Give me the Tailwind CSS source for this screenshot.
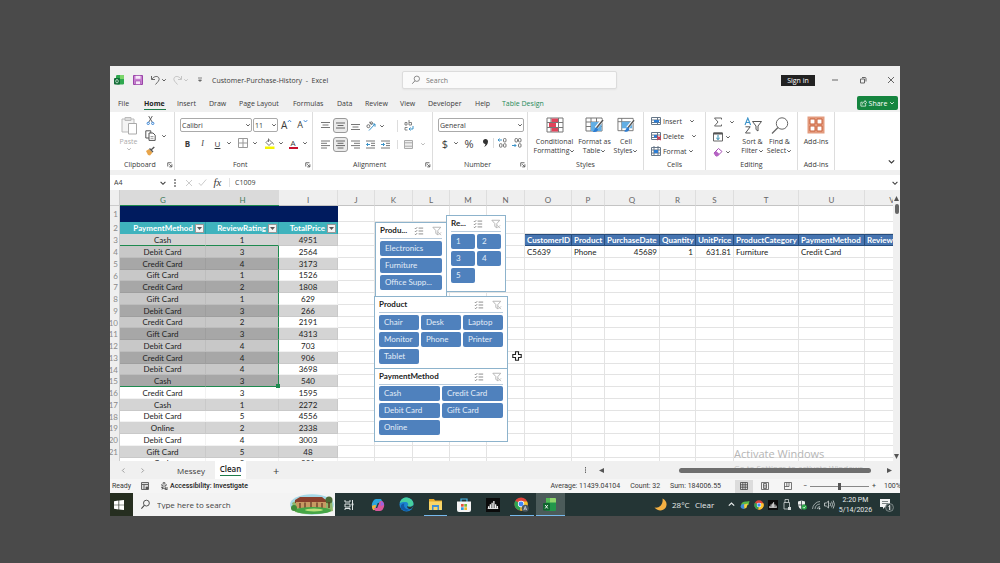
<!DOCTYPE html>
<html lang="en">

<head>
    <meta charset="UTF-8">
    <meta name="viewport" content="width=device-width, initial-scale=1.0">
    <script src="https://cdn.jsdelivr.net/npm/@tailwindcss/browser@4"></script>
    <title>Customer-Purchase-History - Excel</title>
</head>

<body class="flex min-h-screen flex-col bg-[#4a4a4a] pt-[66px] pr-[100px] pb-[47px] pl-[110px] font-['Open_Sans','Noto_Sans',sans-serif] text-[7px] leading-[9px] text-[#3a3a3a]">

    <!-- Shared icons -->
    <svg class="hidden">
        <symbol id="chev" viewBox="0 0 6 6"><path d="M1.2 2.2 3 4l1.800-1.800" fill="none" stroke="currentColor" stroke-width=".8"/></symbol>
        <symbol id="launch" viewBox="0 0 8 8"><path d="M1 6V1h5M3 3l3 3M6.500 3v3.500H3" fill="none" stroke="currentColor" stroke-width="1"/></symbol>
        <symbol id="search" viewBox="0 0 12 12"><circle cx="7" cy="4.500" r="3.200" fill="none" stroke="currentColor"/><path d="M4.700 7 1.500 10.500" stroke="currentColor" stroke-width="1.100"/></symbol>
        <symbol id="multi" viewBox="0 0 12 12"><path d="M1 2.500l1 1 1.800-2M1 6l1 1 1.800-2M1 9.500l1 1 1.800-2M5.500 2.500H11M5.500 6H11M5.500 9.500H11" fill="none" stroke="currentColor"/></symbol>
        <symbol id="nofilter" viewBox="0 0 12 12"><path d="M1 1.500h9.500L7 5.500v5L4.600 9V5.500z" fill="none" stroke="currentColor"/><path d="M7.500 7.500l3.500 3.500M11 7.500 7.500 11" stroke="currentColor" stroke-width=".8"/></symbol>
        <symbol id="chrome" viewBox="0 0 16 16"><circle cx="8" cy="8" r="7.500" fill="#e0443a"/><path d="M8 8 1.500 4.200A7.500 7.500 0 0 0 7 15.400z" fill="#2fa350"/><path d="M8 8l-1 7.400A7.500 7.500 0 0 0 15 5H8z" fill="#f9c72d"/><circle cx="8" cy="8" r="3.600" fill="#fff"/><circle cx="8" cy="8" r="2.800" fill="#4285f4"/></symbol>
        <symbol id="bars" viewBox="0 0 16 16"><path fill="#0b0b0b" d="M0 0h16v16H0z"/><path d="M3 12V9.500M5 12V7M7 12V5.500M9 12V3.500M11 12V7M13 12V9" stroke="#eee" stroke-width="1.500"/><path d="M2 12h12" stroke="#eee"/></symbol>
    </svg>

    <div class="flex flex-1 flex-col overflow-hidden bg-[#f0f0f0]">

        <!-- Title bar -->
        <header class="flex h-7 items-center pl-1">
            <svg class="size-[10px]" viewBox="0 0 10 10"><rect x="2" y="0" width="8" height="9.500" rx="1.200" fill="#2fa84f"/><path d="M6 0h3q1 0 1 1v3H6z" fill="#7bd66a"/><rect x="0" y="3" width="6" height="6.500" rx="1" fill="#126b37"/><ellipse cx="3" cy="6.200" rx="1.300" ry="1.700" fill="none" stroke="#cfe8d6" stroke-width=".8"/></svg>
            <button class="ml-[9px]" aria-label="Save"><svg class="size-[10px]" viewBox="0 0 10 10"><path d="M.5.5h9v9h-9z" fill="#c77fd0" stroke="#9a45a8"/><path d="M2.500.8h5v3h-5z" fill="#f6e8f8"/><path d="M2.500 6h5v3.500h-5z" fill="#f6e8f8" stroke="#9a45a8" stroke-width=".6"/></svg></button>
            <button class="ml-[7px]" aria-label="Undo"><svg class="h-[10px] w-[11px]" viewBox="0 0 11 10"><path d="M1.500 1v3.500H5M1.800 4.200C4 1 8 .5 9 3.200 9.800 5.500 7.500 7 5.500 9.500" fill="none" stroke="#666" stroke-width="1"/></svg></button>
            <svg class="size-[6px]"><use href="#chev"/></svg>
            <button class="ml-[5px]" aria-label="Redo"><svg class="h-[10px] w-[11px]" viewBox="0 0 11 10"><path d="M9.500 1v3.500H6M9.200 4.200C7 1 3 .5 2 3.200 1.200 5.500 3.500 7 5.500 9.500" fill="none" stroke="#c4c4c4" stroke-width="1"/></svg></button>
            <svg class="size-[6px] text-[#bbb]"><use href="#chev"/></svg>
            <svg class="ml-[8px] size-[6px]" viewBox="0 0 6 6"><path d="M1 1h4M1.500 3 3 4.500 4.500 3z" fill="#666" stroke="#666" stroke-width=".8"/></svg>
            <h1 class="ml-[9px] w-[190px] whitespace-nowrap">Customer-Purchase-History &nbsp;- &nbsp;Excel</h1>
            <label class="flex h-[18px] w-[215px] items-center rounded-[2px] border border-[#dcdcdc] bg-[#fafafa] pl-2 text-[#777] shadow-xs">
                <svg class="size-[10px]"><use href="#search"/></svg>
                <input class="ml-[5px] w-[150px] outline-none placeholder:text-[#777]" type="search" placeholder="Search" aria-label="Search">
            </label>
            <button class="ml-auto h-[11px] w-[34px] bg-[#222] leading-[11px] text-white">Sign in</button>
            <button class="ml-[16px]" aria-label="Minimize"><svg class="size-[8px]" viewBox="0 0 8 8"><path d="M1 4h6" stroke="#666"/></svg></button>
            <button class="ml-[20px]" aria-label="Restore"><svg class="size-[8px]" viewBox="0 0 8 8"><path d="M3 1.500h3q1 0 1 1v3M1.500 3h4v4h-4z" fill="none" stroke="#666"/></svg></button>
            <button class="mr-[5px] ml-[20px]" aria-label="Close"><svg class="size-[8px]" viewBox="0 0 8 8"><path d="M1 1l6 6M7 1 1 7" stroke="#666"/></svg></button>
        </header>

        <!-- Ribbon tabs -->
        <nav class="flex h-[18px] items-center pl-2 whitespace-nowrap">
            <a href="#" class="w-[26px]">File</a>
            <a href="#" class="mt-[2px] w-[22px] border-b border-[#1e7b4a] pb-px font-bold text-[#222]">Home</a>
            <a href="#" class="ml-[11px] w-[32px]">Insert</a>
            <a href="#" class="w-[30px]">Draw</a>
            <a href="#" class="w-[54px]">Page Layout</a>
            <a href="#" class="w-[44px]">Formulas</a>
            <a href="#" class="w-[28px]">Data</a>
            <a href="#" class="w-[35px]">Review</a>
            <a href="#" class="w-[28px]">View</a>
            <a href="#" class="w-[47px]">Developer</a>
            <a href="#" class="w-[27px]">Help</a>
            <a href="#" class="text-[#1e8a5a]">Table Design</a>
            <button class="mr-[2px] ml-auto flex h-[14px] w-[41px] items-center justify-center gap-[2px] rounded-[2px] bg-[#15853f] text-white">
                <svg class="size-[7px]" viewBox="0 0 8 8"><path d="M3 2.500H1V7h5.500V5M2.800 5c0-2 1.200-3 3-3V.6L7.600 3 5.800 4.800V3.500" fill="none" stroke="#fff" stroke-width=".8"/></svg>
                Share
                <svg class="size-[6px]"><use href="#chev"/></svg>
            </button>
        </nav>

        <!-- Ribbon -->
        <section class="flex h-[58px] bg-white whitespace-nowrap">
            <div class="flex w-[65px] flex-col border-r border-[#ddd]">
                <div class="flex h-12 pt-1">
                    <button class="ml-[2px] flex w-[33px] flex-col items-center text-[#aaa]">
                        <svg class="h-[19px] w-[18px]" viewBox="0 0 18 19"><path d="M2 3h12v13H2z" fill="#f4f4f4" stroke="#bbb"/><path d="M5 1.500h6v3H5z" fill="#ddd" stroke="#bbb"/><path d="M8.500 7.500h8v10.500h-8z" fill="#fff" stroke="#aaa"/></svg>
                        <span class="mt-[2px]">Paste</span>
                        <svg class="size-[6px]"><use href="#chev"/></svg>
                    </button>
                    <div class="flex flex-col gap-[5px]">
                        <button class="pl-[1px]" aria-label="Cut"><svg class="size-[9px]" viewBox="0 0 10 10"><path d="M3 0l4 7M7 0 3 7" stroke="#555"/><circle cx="2.500" cy="8.200" r="1.300" fill="none" stroke="#2b7cd3"/><circle cx="7.500" cy="8.200" r="1.300" fill="none" stroke="#2b7cd3"/></svg></button>
                        <button class="flex items-center gap-[5px]" aria-label="Copy"><svg class="size-[11px]" viewBox="0 0 11 11"><path d="M.8.800h5V8h-5z" fill="#fff" stroke="#555"/><path d="M4 3h4l2.200 2.200v5.200H4z" fill="#fff" stroke="#555"/><path d="M5.500 6.500h3M5.500 8.300h3" stroke="#777" stroke-width=".7"/></svg><svg class="size-[6px]"><use href="#chev"/></svg></button>
                        <button aria-label="Format Painter"><svg class="size-[10px]" viewBox="0 0 10 10"><path d="M1 5l3-2 3.500 3.500L5 9.500 3 9z" fill="#e8a54b"/><path d="M4.500 2.500 8 6M6 4l3.300-3" stroke="#555" stroke-width="1.400"/></svg></button>
                    </div>
                </div>
                <div class="flex items-center justify-between pr-px pl-[14px]">Clipboard <svg class="size-[6px]"><use href="#launch"/></svg></div>
            </div>

            <div class="flex w-[138px] flex-col border-r border-[#ddd]">
                <div class="flex h-12 flex-col gap-[2px] pt-[6px] pl-[5px]">
                    <div class="flex items-center">
                        <select class="h-[14px] w-[72px] appearance-none rounded-[2px] border border-[#aaa] pl-px leading-[11px]" aria-label="Font"><option>Calibri</option></select>
                        <svg class="-ml-[7px] size-[6px]"><use href="#chev"/></svg>
                        <select class="ml-[2px] h-[14px] w-[25px] appearance-none rounded-[2px] border border-[#aaa] pl-px leading-[11px]" aria-label="Font size"><option>11</option></select>
                        <svg class="-ml-[7px] size-[6px]"><use href="#chev"/></svg>
                        <button class="ml-[4px] flex" aria-label="Increase font size"><span class="text-[10px] leading-[12px]">A</span><svg class="h-[4px] w-[5px]" viewBox="0 0 5 4"><path d="M.8 3 2.500 1.200 4.200 3" fill="none" stroke="#2b7cd3" stroke-width=".9"/></svg></button>
                        <button class="ml-[5px] flex" aria-label="Decrease font size"><span class="text-[9px] leading-[12px]">A</span><svg class="h-[4px] w-[5px]" viewBox="0 0 5 4"><path d="M.8 1.200 2.500 3 4.200 1.200" fill="none" stroke="#2b7cd3" stroke-width=".9"/></svg></button>
                    </div>
                    <div class="flex h-[18px] items-center text-[8px]">
                        <button class="w-[15px] font-bold">B</button>
                        <button class="w-[15px] font-['Liberation_Serif'] italic">I</button>
                        <button class="w-[15px] underline">U</button>
                        <svg class="h-[6px] w-2"><use href="#chev"/></svg>
                        <button class="w-[18px] pl-[5px]" aria-label="Borders"><svg class="size-[10px]" viewBox="0 0 10 10"><path d="M.5.500h9v9h-9zM5 .5v9M.5 5h9" fill="none" stroke="#999"/></svg></button>
                        <svg class="h-[6px] w-2"><use href="#chev"/></svg>
                        <button class="w-[18px] pl-[5px]" aria-label="Fill color"><svg class="size-[11px]" viewBox="0 0 11 11"><path d="M2 4.500 5 1.500l3 3-3 3zM4.500.5V4M8.500 4.500l1 2" fill="none" stroke="#666" stroke-width=".9"/><path d="M1 8.500h9.500V11H1z" fill="#f4f400"/></svg></button>
                        <svg class="h-[6px] w-2"><use href="#chev"/></svg>
                        <button class="flex w-[16px] justify-center"><span class="w-[9px] border-b-2 border-[#c8102e] leading-[9px]">A</span></button>
                        <svg class="h-[6px] w-2"><use href="#chev"/></svg>
                    </div>
                </div>
                <div class="flex items-center justify-between pr-px pl-[58px]">Font <svg class="size-[6px]"><use href="#launch"/></svg></div>
            </div>

            <div class="flex w-[120px] flex-col border-r border-[#ddd]">
                <div class="flex h-12 flex-col gap-[2px] pt-[6px] pl-[5px]">
                    <div class="flex h-[15px] items-center">
                        <button class="flex w-[15px] justify-center" aria-label="Top align"><svg class="size-[9px]" viewBox="0 0 9 9"><path d="M0 1.500h9M1.500 4h6M0 6.500h9" stroke="#777"/></svg></button>
                        <button class="flex size-[15px] items-center justify-center rounded-[3px] border border-[#999] bg-[#ebebeb]" aria-label="Middle align"><svg class="size-[9px]" viewBox="0 0 9 9"><path d="M0 2h9M1.500 4.500h6M0 7h9" stroke="#666"/></svg></button>
                        <button class="flex w-[15px] justify-center" aria-label="Bottom align"><svg class="size-[9px]" viewBox="0 0 9 9"><path d="M0 3.500h9M1.500 6h6M0 8.500h9" stroke="#777"/></svg></button>
                        <button class="flex w-[15px] justify-center" aria-label="Orientation"><svg class="size-[10px]" viewBox="0 0 10 10"><path d="M3 9.500 9 3M6.300 3H9v2.700" fill="none" stroke="#3b93c9"/><circle cx="2.400" cy="5.200" r="1.500" fill="none" stroke="#666" stroke-width=".9"/><path d="M3.200 1 6 3.500" stroke="#666" stroke-width=".9"/><circle cx="5.300" cy="2" r="1.200" fill="none" stroke="#666" stroke-width=".9"/></svg></button>
                        <svg class="h-[6px] w-2"><use href="#chev"/></svg>
                        <button class="ml-[11px] flex w-[22px] justify-center border-l border-[#ddd]" aria-label="Wrap text"><svg class="h-[12px] w-[10px]" viewBox="0 0 10 12"><path d="M1 5V2.500h2V5zM5 0v5h2.500V2.500H5M3.500 7.500H1V10h2.500" fill="none" stroke="#777" stroke-width=".9"/><path d="M5 9h4V6M6.500 7.500 5 9l1.500 1.500" fill="none" stroke="#3b93c9"/></svg></button>
                    </div>
                    <div class="flex h-[18px] items-center">
                        <button class="flex w-[15px] justify-center" aria-label="Align left"><svg class="size-[9px]" viewBox="0 0 9 9"><path d="M0 1h9M0 3.300h6M0 5.600h9M0 8h6" stroke="#777"/></svg></button>
                        <button class="flex size-[15px] items-center justify-center rounded-[3px] border border-[#999] bg-[#ebebeb]" aria-label="Center"><svg class="size-[9px]" viewBox="0 0 9 9"><path d="M0 1h9M1.500 3.300h6M0 5.600h9M1.500 8h6" stroke="#666"/></svg></button>
                        <button class="flex w-[15px] justify-center" aria-label="Align right"><svg class="size-[9px]" viewBox="0 0 9 9"><path d="M0 1h9M3 3.300h6M0 5.600h9M3 8h6" stroke="#777"/></svg></button>
                        <button class="flex w-[15px] justify-center" aria-label="Decrease indent"><svg class="size-[9px]" viewBox="0 0 9 9"><path d="M0 1h9M5 3.300h4M5 5.600h4M0 8h9" stroke="#777"/><path d="M4 4.500H.5M2 3 .5 4.500 2 6" fill="none" stroke="#3b93c9"/></svg></button>
                        <button class="flex w-[15px] justify-center" aria-label="Increase indent"><svg class="size-[9px]" viewBox="0 0 9 9"><path d="M0 1h9M5 3.300h4M5 5.600h4M0 8h9" stroke="#777"/><path d="M0 4.500h3.500M2 3l1.500 1.500L2 6" fill="none" stroke="#3b93c9"/></svg></button>
                        <button class="ml-[4px] flex w-[22px] justify-center border-l border-[#ddd]" aria-label="Merge"><svg class="size-[9px]" viewBox="0 0 9 9"><path d="M.5.500h8v8h-8zM.5 2.800h8M.5 6.200h8" fill="#eee" stroke="#aaa"/></svg></button>
                        <svg class="h-[6px] w-2 text-[#aaa]"><use href="#chev"/></svg>
                    </div>
                </div>
                <div class="flex items-center justify-between pr-px pl-10">Alignment <svg class="size-[6px]"><use href="#launch"/></svg></div>
            </div>

            <div class="flex w-[95px] flex-col border-r border-[#ddd]">
                <div class="flex h-12 flex-col gap-[2px] pt-[6px] pl-[5px]">
                    <div class="flex items-center">
                        <select class="h-[14px] w-[86px] appearance-none rounded-[2px] border border-[#aaa] pl-px leading-[11px]" aria-label="Number format"><option>General</option></select>
                        <svg class="-ml-[7px] size-[6px]"><use href="#chev"/></svg>
                    </div>
                    <div class="flex h-[18px] items-center text-[11px]">
                        <button class="w-[14px]">$</button>
                        <svg class="h-[6px] w-2"><use href="#chev"/></svg>
                        <button class="w-[18px]">%</button>
                        <button class="flex w-[14px] justify-center" aria-label="Comma style"><svg class="h-2 w-[5px]" viewBox="0 0 5 8"><path d="M2.500 0C4 0 5 1 5 2.600 5 5 3.500 7 1 8c.8-1 1.400-2 1.400-3C1 5 0 4 0 2.600 0 1 1 0 2.500 0z" fill="#333"/></svg></button>
                        <button class="ml-[1px] flex w-[16px] justify-center border-l border-[#ddd]" aria-label="Increase decimal"><svg class="size-[10px]" viewBox="0 0 10 10"><path d="M5 2H1M2.500.5 1 2l1.500 1.500" fill="none" stroke="#3b93c9"/><rect x="6.500" y=".5" width="2.500" height="3.500" rx="1" fill="none" stroke="#666" stroke-width=".9"/><rect x="2.500" y="5.700" width="2.500" height="3.500" rx="1" fill="none" stroke="#666" stroke-width=".9"/><rect x="6.500" y="5.700" width="2.500" height="3.500" rx="1" fill="none" stroke="#666" stroke-width=".9"/></svg></button>
                        <button class="flex w-[16px] justify-center" aria-label="Decrease decimal"><svg class="size-[10px]" viewBox="0 0 10 10"><path d="M0 7.500h4M2.500 6 4 7.500 2.500 9" fill="none" stroke="#3b93c9"/><rect x="6.500" y=".5" width="2.500" height="3.500" rx="1" fill="none" stroke="#666" stroke-width=".9"/><rect x="3" y=".5" width="2.500" height="3.500" rx="1" fill="none" stroke="#666" stroke-width=".9"/><rect x="6.500" y="5.700" width="2.500" height="3.500" rx="1" fill="none" stroke="#666" stroke-width=".9"/></svg></button>
                    </div>
                </div>
                <div class="flex items-center justify-between pr-px pl-[31px]">Number <svg class="size-[6px]"><use href="#launch"/></svg></div>
            </div>

            <div class="flex w-[116px] flex-col border-r border-[#ddd]">
                <div class="flex h-12 pt-[5px] pl-[4px]">
                    <button class="flex w-[45px] flex-col items-center">
                        <svg class="h-[16px] w-[18px]" viewBox="0 0 18 16"><path d="M1 1h16v14H1zM1 5.500h16M1 10.500h16M5 1v14M12.500 1v14" fill="#fff" stroke="#777"/><path d="M5.500 1.500H12V5H5.500zM5.500 11H12v3.500H5.500z" fill="#e0435a"/><path d="M3 6h7v4H3z" fill="#e0435a"/></svg>
                        <span class="mt-[4px]">Conditional</span>
                        <span class="flex items-center">Formatting <svg class="size-[6px]"><use href="#chev"/></svg></span>
                    </button>
                    <button class="flex w-[35px] flex-col items-center">
                        <svg class="h-[16px] w-[19px]" viewBox="0 0 19 16"><path d="M1 1h16v13H1zM1 5h16M1 9.500h16M6 1v13M11.500 1v13" fill="#fff" stroke="#777"/><path d="M6 5h10.500v9H6z" fill="#62aee4"/><path d="M17.500 3 11 11" stroke="#fff" stroke-width="3"/><path d="M18 3l-6.500 8" stroke="#555" stroke-width="1.500"/><path d="M11.500 10.500c-2 0-1.500 3-4 4 3 1.500 5.500 0 5.500-2.500z" fill="#2b7cd3"/></svg>
                        <span class="mt-[4px]">Format as</span>
                        <span class="flex items-center">Table <svg class="size-[6px]"><use href="#chev"/></svg></span>
                    </button>
                    <button class="flex w-[28px] flex-col items-center">
                        <svg class="h-[16px] w-[18px]" viewBox="0 0 19 16"><path d="M1 1h16v13H1zM1 4.500h16M5 1v13" fill="#fff" stroke="#777"/><path d="M5 4.500h11v7H5z" fill="#62aee4"/><path d="M17.500 3 11 11" stroke="#fff" stroke-width="3"/><path d="M18 3l-6.500 8" stroke="#555" stroke-width="1.500"/><path d="M11.500 10.500c-2 0-1.500 3-4 4 3 1.500 5.500 0 5.500-2.500z" fill="#2b7cd3"/></svg>
                        <span class="mt-[4px]">Cell</span>
                        <span class="flex items-center">Styles <svg class="size-[6px]"><use href="#chev"/></svg></span>
                    </button>
                </div>
                <div class="text-center">Styles</div>
            </div>

            <div class="flex w-[62px] flex-col border-r border-[#ddd]">
                <div class="flex h-12 flex-col gap-[5px] pt-[4px] pl-[7px]">
                    <button class="flex items-center"><svg class="mr-[2px] size-[10px]" viewBox="0 0 10 10"><path d="M.5 1.500h9v7h-9zM.5 4h9M.5 6.500h9M6.500 1.500v7" fill="#fff" stroke="#678"/><path d="M3 4h5v2.500H3z" fill="#2b7cd3"/></svg>Insert<svg class="ml-[7px] size-[6px]"><use href="#chev"/></svg></button>
                    <button class="flex items-center"><svg class="mr-[2px] size-[10px]" viewBox="0 0 10 10"><path d="M.5 1.500h9v7h-9zM.5 4h9M.5 6.500h9M6.500 1.500v7" fill="#fff" stroke="#678"/><path d="M3 4h3v2.500H3z" fill="#2b7cd3"/><path d="M6 5l4 4M10 5 6 9" stroke="#d5344a" stroke-width="1.200"/></svg>Delete<svg class="ml-[7px] size-[6px]"><use href="#chev"/></svg></button>
                    <button class="flex items-center"><svg class="mr-[2px] size-[10px]" viewBox="0 0 10 10"><path d="M.5 1.500h9v8h-9zM.5 4h9M.5 7h9M3 0v9.500M7 0v9.500" fill="#fff" stroke="#678"/><path d="M3 4h4v3H3z" fill="#2b7cd3"/></svg>Format<svg class="ml-px size-[6px]"><use href="#chev"/></svg></button>
                </div>
                <div class="text-center">Cells</div>
            </div>

            <div class="flex w-[92px] flex-col border-r border-[#ddd]">
                <div class="flex h-12 pt-[5px] pl-[7px]">
                    <div class="flex w-[26px] flex-col gap-[5px]">
                        <button class="flex items-center gap-[6px]" aria-label="AutoSum"><svg class="size-[10px]" viewBox="0 0 10 10"><path d="M8.500 2.500V1h-7L5 5 1.500 9h7V7.500" fill="none" stroke="#666"/></svg><svg class="size-[6px]"><use href="#chev"/></svg></button>
                        <button class="flex items-center gap-[2px]" aria-label="Fill"><svg class="size-[10px]" viewBox="0 0 10 10"><path d="M.5 1h9v8h-9z" fill="#fff" stroke="#666"/><path d="M.5 1.500h9" stroke="#555" stroke-width="2"/><path d="M5 3v4.500M3.300 6 5 7.500 6.700 6" fill="none" stroke="#2b8ab0"/></svg><svg class="size-[6px]"><use href="#chev"/></svg></button>
                        <button class="flex items-center gap-[2px]" aria-label="Clear"><svg class="size-[10px]" viewBox="0 0 10 10"><path d="M1 6l4.500-4.500 3.500 3L4.500 9H3z" fill="#fff" stroke="#a64fb5"/><path d="M1 6l2-2 3.500 3L4.500 9H3z" fill="#b561c4"/></svg><svg class="size-[6px]"><use href="#chev"/></svg></button>
                    </div>
                    <button class="flex w-[27px] flex-col items-center">
                        <svg class="h-[17px] w-[18px]" viewBox="0 0 18 17"><path d="M1 8 3.800 1l2.800 7M2 5.500h3.600" fill="none" stroke="#3b93c9" stroke-width="1.100"/><path d="M1.500 9.800h4.700L1.500 16h5" fill="none" stroke="#555"/><path d="M8.500 4.500h9L14 9v5l-2-1.500V9z" fill="#fff" stroke="#555"/></svg>
                        <span class="mt-[3px]">Sort &amp;</span>
                        <span class="flex items-center">Filter <svg class="size-[6px]"><use href="#chev"/></svg></span>
                    </button>
                    <button class="flex w-[27px] flex-col items-center">
                        <svg class="h-[17px] w-[18px]" viewBox="0 0 18 17"><circle cx="11" cy="6.500" r="5.700" fill="none" stroke="#666"/><path d="M7 10.500 1 16.500" stroke="#666" stroke-width="1.200"/></svg>
                        <span class="mt-[3px]">Find &amp;</span>
                        <span class="flex items-center">Select <svg class="size-[6px]"><use href="#chev"/></svg></span>
                    </button>
                </div>
                <div class="text-center">Editing</div>
            </div>

            <div class="flex w-[37px] flex-col border-r border-[#ddd]">
                <button class="flex h-12 flex-col items-center pt-[4px]">
                    <svg class="size-[18px]" viewBox="0 0 18 18"><rect x=".5" y=".5" width="17" height="17" fill="#e39b7e"/><path d="M3 3h5v5H3zM10 3h5v5h-5zM3 10h5v5H3zM10 10h5v5h-5z" fill="#fff" stroke="#c9603a"/></svg>
                    <span class="mt-[3px]">Add-ins</span>
                </button>
                <div class="text-center">Add-ins</div>
            </div>
            <button class="mr-1 mb-1 ml-auto self-end" aria-label="Collapse ribbon"><svg class="size-[9px]"><use href="#chev"/></svg></button>
        </section>

        <!-- Formula bar -->
        <div class="mt-[5px] flex h-[15px] items-center bg-white">
            <input class="w-[49px] pl-[4px]" type="text" value="A4" aria-label="Name box">
            <svg class="size-[8px]"><use href="#chev"/></svg>
            <svg class="ml-[6px] h-[8px] w-[4px]" viewBox="0 0 4 8"><path d="M2 0v2M2 3v2M2 6v2" stroke="#555" stroke-width="1.200"/></svg>
            <button class="ml-[8px]" aria-label="Cancel"><svg class="size-[8px]" viewBox="0 0 8 8"><path d="M1 1l6 6M7 1 1 7" stroke="#ccc"/></svg></button>
            <button class="ml-[5px]" aria-label="Enter"><svg class="size-[9px]" viewBox="0 0 9 9"><path d="M.8 5 3 7.500 8.200 1.500" fill="none" stroke="#ccc"/></svg></button>
            <button class="ml-[5px] w-[11px] font-['Liberation_Serif'] text-[11px] italic">fx</button>
            <input class="ml-[6px] min-w-0 flex-1 border-l border-[#e2e2e2] pl-[5px]" type="text" value="C1009" aria-label="Formula">
            <svg class="mr-px size-[8px]"><use href="#chev"/></svg>
        </div>

        <!-- Sheet -->
        <div class="flex h-[271px] flex-auto">
            <div class="relative min-w-0 flex-1 overflow-hidden bg-white">
                <table class="w-full min-w-[810px] table-fixed border-separate border-spacing-0 font-['Lato',sans-serif] text-[8px] leading-[10px] text-[#222]">
                    <colgroup>
                        <col class="w-[10px]"><col class="w-[86px]"><col class="w-[73px]"><col class="w-[59px]"><col class="w-[37px]">
                        <col class="w-[38px]"><col class="w-[37px]"><col class="w-[37px]"><col class="w-[38px]"><col class="w-[47px]">
                        <col class="w-[33px]"><col class="w-[55px]"><col class="w-[36px]"><col class="w-[38px]"><col class="w-[65px]">
                        <col class="w-[66px]"><col>
                    </colgroup>
                    <thead id="letters"></thead>
                    <tbody id="cells"></tbody>
                </table>

                <!-- Slicers float over the cells -->
                <section class="absolute top-[32px] left-[265px] h-[76px] w-[72px] border border-[#8db3cc] bg-white px-[4px] pt-[2px] font-['Lato',sans-serif] text-[8px]">
                    <h2 class="mb-[2px] flex h-[14px] items-center border-b border-[#b8cbdc] pb-[2px] font-bold text-[#222]">Produ...<svg class="ml-auto size-[10px] text-[#777]"><use href="#multi"/></svg><svg class="ml-[8px] size-[10px] text-[#aaa]"><use href="#nofilter"/></svg></h2>
                    <div class="grid gap-[2px] text-[#e3edf8]">
                        <button class="h-[15px] rounded-[2px] bg-[#4f81bd] pl-[5px] text-left">Electronics</button>
                        <button class="h-[15px] rounded-[2px] bg-[#4f81bd] pl-[5px] text-left">Furniture</button>
                        <button class="h-[15px] rounded-[2px] bg-[#4f81bd] pl-[5px] text-left">Office Supp...</button>
                    </div>
                </section>
                <section class="absolute top-[25px] left-[336px] h-[77px] w-[60px] border border-[#8db3cc] bg-white px-[4px] pt-[2px] font-['Lato',sans-serif] text-[8px]">
                    <h2 class="mb-[2px] flex h-[14px] items-center border-b border-[#b8cbdc] pb-[2px] font-bold text-[#222]">Re...<svg class="ml-auto size-[10px] text-[#777]"><use href="#multi"/></svg><svg class="ml-[8px] size-[10px] text-[#aaa]"><use href="#nofilter"/></svg></h2>
                    <div class="grid grid-cols-2 gap-[2px] text-[#e3edf8]">
                        <button class="h-[15px] rounded-[2px] bg-[#4f81bd] pl-[5px] text-left">1</button>
                        <button class="h-[15px] rounded-[2px] bg-[#4f81bd] pl-[5px] text-left">2</button>
                        <button class="h-[15px] rounded-[2px] bg-[#4f81bd] pl-[5px] text-left">3</button>
                        <button class="h-[15px] rounded-[2px] bg-[#4f81bd] pl-[5px] text-left">4</button>
                        <button class="h-[15px] rounded-[2px] bg-[#4f81bd] pl-[5px] text-left">5</button>
                    </div>
                </section>
                <section class="absolute top-[106px] left-[264px] h-[73px] w-[134px] border border-[#8db3cc] bg-white px-[4px] pt-[2px] font-['Lato',sans-serif] text-[8px]">
                    <h2 class="mb-[2px] flex h-[14px] items-center border-b border-[#b8cbdc] pb-[2px] font-bold text-[#222]">Product<svg class="ml-auto size-[10px] text-[#777]"><use href="#multi"/></svg><svg class="mr-[1px] ml-[8px] size-[10px] text-[#aaa]"><use href="#nofilter"/></svg></h2>
                    <div class="grid grid-cols-3 gap-[2px] text-[#e3edf8]">
                        <button class="h-[15px] rounded-[2px] bg-[#4f81bd] pl-[5px] text-left">Chair</button>
                        <button class="h-[15px] rounded-[2px] bg-[#4f81bd] pl-[5px] text-left">Desk</button>
                        <button class="h-[15px] rounded-[2px] bg-[#4f81bd] pl-[5px] text-left">Laptop</button>
                        <button class="h-[15px] rounded-[2px] bg-[#4f81bd] pl-[5px] text-left">Monitor</button>
                        <button class="h-[15px] rounded-[2px] bg-[#4f81bd] pl-[5px] text-left">Phone</button>
                        <button class="h-[15px] rounded-[2px] bg-[#4f81bd] pl-[5px] text-left">Printer</button>
                        <button class="h-[15px] rounded-[2px] bg-[#4f81bd] pl-[5px] text-left">Tablet</button>
                    </div>
                </section>
                <section class="absolute top-[178px] left-[264px] h-[74px] w-[134px] border border-[#8db3cc] bg-white px-[4px] pt-[2px] font-['Lato',sans-serif] text-[8px]">
                    <h2 class="mb-px flex h-[14px] items-center border-b border-[#b8cbdc] pb-[2px] font-bold text-[#222]">PaymentMethod<svg class="ml-auto size-[10px] text-[#777]"><use href="#multi"/></svg><svg class="mr-[1px] ml-[8px] size-[10px] text-[#aaa]"><use href="#nofilter"/></svg></h2>
                    <div class="grid grid-cols-2 gap-[2px] text-[#e3edf8]">
                        <button class="h-[15px] rounded-[2px] bg-[#4f81bd] pl-[5px] text-left">Cash</button>
                        <button class="h-[15px] rounded-[2px] bg-[#4f81bd] pl-[5px] text-left">Credit Card</button>
                        <button class="h-[15px] rounded-[2px] bg-[#4f81bd] pl-[5px] text-left">Debit Card</button>
                        <button class="h-[15px] rounded-[2px] bg-[#4f81bd] pl-[5px] text-left">Gift Card</button>
                        <button class="h-[15px] rounded-[2px] bg-[#4f81bd] pl-[5px] text-left">Online</button>
                    </div>
                </section>
                <svg class="absolute top-[161px] left-[402px] size-[10px]" viewBox="0 0 10 10"><path d="M3.500.8h3v2.700h2.700v3H6.500v2.700h-3V6.500H.8v-3h2.700z" fill="#fff" stroke="#222" stroke-width="1.100"/></svg>
                <!-- Activation notice -->
                <p class="absolute top-[257px] left-[624px] text-[11px] leading-[14px] whitespace-nowrap text-[#b5b5b5]">Activate Windows</p>
            </div>
            <div class="flex w-[7px] flex-col items-center pt-[6px] pb-[2px]">
                <svg class="size-[5px]" viewBox="0 0 5 5"><path d="M2.500 0 5 5H0z" fill="#555"/></svg>
                <div class="mt-[3px] h-[10px] w-[4px] rounded-[2px] bg-[#666]"></div>
                <svg class="mt-auto size-[5px]" viewBox="0 0 5 5"><path d="M0 0h5L2.500 5z" fill="#555"/></svg>
            </div>
        </div>

        <!-- Sheet tabs -->
        <div class="flex h-[18px] items-center pl-[10px] text-[8px]">
            <svg class="size-[7px] rotate-90 text-[#999]"><use href="#chev"/></svg>
            <svg class="ml-[12px] size-[7px] -rotate-90 text-[#999]"><use href="#chev"/></svg>
            <button class="ml-[21px] w-[48px] text-center">Messey</button>
            <button class="flex h-[18px] w-[31px] justify-center bg-white font-semibold text-[#222]"><span class="mt-[2px] h-[13px] border-b border-[#1e7b4a] leading-[12px]">Clean</span></button>
            <button class="ml-[27px] text-[11px]" aria-label="New sheet">+</button>
            <svg class="mr-[12px] ml-auto h-[8px] w-[3px]" viewBox="0 0 4 8"><path d="M2 0v2M2 3v2M2 6v2" stroke="#555" stroke-width="1.200"/></svg>
            <svg class="size-[5px]" viewBox="0 0 5 5"><path d="M5 0v5L0 2.500z" fill="#555"/></svg>
            <div class="relative mr-[16px] ml-[75px] h-[12px] w-[192px]">
                <p class="absolute -top-[2px] left-[55px] text-[8px] leading-[11px] whitespace-nowrap text-[#c0c0c0]">Go to Settings to activate Windows.</p>
                <div class="absolute top-[4px] h-[5px] w-full rounded-[3px] bg-[#6e6e6e]"></div>
            </div>
            <svg class="mr-[8px] size-[5px]" viewBox="0 0 5 5"><path d="M0 0v5l5-2.500z" fill="#555"/></svg>
        </div>

        <!-- Status bar -->
        <div class="flex h-[14px] items-center overflow-hidden bg-[#f5f5f5] pl-[2px] font-['Roboto',sans-serif] whitespace-nowrap">
            <span class="w-[29px]">Ready</span>
            <svg class="size-[8px]" viewBox="0 0 8 8"><path d="M.5.500h7v7h-7zM.5 2.500h7M3 2.500v5" fill="#ddd" stroke="#666"/><circle cx="6" cy="6" r="1.500" fill="#555"/></svg>
            <svg class="ml-[11px] size-[8px]" viewBox="0 0 8 8"><circle cx="4" cy="1.200" r="1" fill="none" stroke="#444" stroke-width=".8"/><path d="M1 2.800l2 .5v1.500L2 7.500M7 2.800l-2 .5v1.500L6 7.500M1 5l6 3M7 5v3" fill="none" stroke="#444" stroke-width=".9"/></svg>
            <span class="ml-[2px] font-medium text-[#222]">Accessibility: Investigate</span>
            <span class="ml-auto">Average: 11439.04104</span>
            <span class="ml-[10px]">Count: 32</span>
            <span class="ml-[10px]">Sum: 184006.55</span>
            <button class="ml-[14px] flex h-[13px] w-[18px] items-center justify-center bg-[#dcdcdc]" aria-label="Normal view"><svg class="size-[8px]" viewBox="0 0 8 8"><path d="M.5.500h7v7h-7zM.5 2.800h7M.5 5.200h7M2.800.5v7M5.200.5v7" fill="none" stroke="#444" stroke-width=".8"/></svg></button>
            <button class="ml-[8px]" aria-label="Page layout view"><svg class="size-[8px]" viewBox="0 0 8 8"><path d="M.5.500h7v7h-7zM2.500 1.500h3v5h-3zM2.500 3.200h3M2.500 5h3" fill="none" stroke="#555" stroke-width=".8"/></svg></button>
            <button class="ml-[15px]" aria-label="Page break view"><svg class="size-[8px]" viewBox="0 0 8 8"><path d="M.5.500h7v7h-7zM.5 4.500H5V.5M2.800.5v4" fill="none" stroke="#555" stroke-width=".8"/></svg></button>
            <span class="ml-[11px]">−</span>
            <span class="relative mx-[3px] flex h-[8px] w-[59px] items-center">
                <span class="h-px w-full bg-[#888]"></span>
                <input class="absolute inset-0 w-full opacity-0" type="range" value="50" aria-label="Zoom">
                <span class="absolute left-[28px] h-[7px] w-[3px] bg-[#555]"></span>
            </span>
            <span>+</span>
            <span class="ml-[8px] w-[16px]">100%</span>
        </div>

        <!-- Taskbar -->
        <footer class="flex h-[23px] items-stretch bg-[#243535] text-[#e6eaea] whitespace-nowrap">
            <button class="flex w-[23px] items-center bg-[#262e20] pl-[4px]" aria-label="Start"><svg class="size-[10px]" viewBox="0 0 10 10"><path d="M0 1.200 4.500.6v4.100H0zM5.200.5 10 0v4.700H5.200zM0 5.300h4.500v4.100L0 8.800zM5.200 5.300H10V10l-4.800-.5z" fill="#fff"/></svg></button>
            <label class="flex w-[202px] items-center bg-[#f3f3f3] pl-[7px] text-[#444]">
                <svg class="size-[11px]"><use href="#search"/></svg>
                <input class="ml-[6px] min-w-0 flex-1 text-[8px] outline-none placeholder:text-[#444]" type="search" placeholder="Type here to search" aria-label="Taskbar search">
                <svg class="mr-px h-[21px] w-[44px]" viewBox="0 0 44 21"><ellipse cx="22" cy="10.500" rx="22" ry="10.300" fill="#a5d8e6"/><path d="M2 9q10-7 40-3l1 11q-20 6-38 1z" fill="#8fb56a"/><path d="M5 6l5-3h22l5 4v2H5z" fill="#8a3f2c"/><path d="M6 8h30v6H6z" fill="#c79a62"/><path d="M10 9v5M15 8.500V14M21 8v6M27 8.500V14M32 9v5" stroke="#74482f" stroke-width="1.500"/><ellipse cx="23" cy="16.500" rx="18" ry="3.500" fill="#45a646"/><ellipse cx="24" cy="16" rx="9" ry="1.500" fill="#b8e07a"/><circle cx="39" cy="6" r="3.500" fill="#4a6b36"/><path d="M39 8v6" stroke="#5b3c22" stroke-width="1.500"/><circle cx="4" cy="14" r="3" fill="#3f8b3a"/></svg>
            </label>
            <div class="grid w-[230px] grid-cols-8">
                <button class="flex items-center justify-center" aria-label="Task view"><svg class="size-[10px]" viewBox="0 0 10 10"><path d="M1 0v2h5V0M1 4h5v3H1zM1 10V8.500h5V10M8.500 0v10" fill="none" stroke="#dfe5e5"/><path d="M7.500 3.500h2v1.800h-2z" fill="#dfe5e5"/></svg></button>
                <button class="flex items-center justify-center" aria-label="Copilot"><svg class="size-[14px]" viewBox="0 0 14 14"><path d="M5 1h4.500c1 0 1.500 2 2 3.500H8L6 10c-.5 1.500-1 2-2.500 2S.8 9 .8 7.500C1 4 3 1 5 1z" fill="#2aa4dc"/><path d="M1 8c1-1 2-1 4-1l-.8 4c-.4 1-1 1.500-1.700 1C1.300 11.500 1 9.500 1 8z" fill="#f2b23c"/><path d="M9 13H5c-1 0-1.500-1.500-2-3h3l2-5c.5-1.500 1-2 2.500-2s2.700 2 2.700 4c0 3-2 6-4.200 6z" fill="#d9579b"/><path d="M10 3.500c1.500-.5 3 1.500 3 3.500l-3.500 1z" fill="#9b62e0"/><path d="M8 5 6 10H4.800l2-5z" fill="#243535"/></svg></button>
                <button class="flex items-center justify-center" aria-label="Edge"><svg class="size-[15px]" viewBox="0 0 15 15"><circle cx="7.500" cy="7.500" r="7" fill="#1b84d0"/><path d="M.8 6C2 1 6 0 9 .7c4 1 6 4.500 5.300 7C13.500 10 10 10.500 8.500 9c1.500-1.500.5-4-2-4C4 4.800 2 5.500.8 6z" fill="#46cfa0"/><path d="M5.500 6.500C4 9 6 13 11.500 12.500c-3 2-6.500 2-9-.5C.5 9.500 2.500 6 5.500 6.500z" fill="#1159a5"/><path d="M8.500 9c1.500 1.500 5 1 5.800-1.300 0 2-1 3.500-2.600 4.300C9 12 7.500 10.500 8.500 9z" fill="#243535"/></svg></button>
                <button class="mx-[3px] flex items-center justify-center border-b border-[#76b9ed]" aria-label="File Explorer"><svg class="h-[12px] w-[13px]" viewBox="0 0 13 12"><path d="M0 1h5l1 1.500h7V12H0z" fill="#e8a927"/><path d="M0 3.500h13V12H0z" fill="#f8d568"/><path d="M3 7h7v5H8.500V9h-4v3H3z" fill="#3f8fd6"/></svg></button>
                <button class="flex items-center justify-center" aria-label="Store"><svg class="size-[14px]" viewBox="0 0 14 14"><path d="M4 4V1h6v3" fill="none" stroke="#45b6e8" stroke-width="1.200"/><path d="M0 3.500h14V12q0 2-2 2H2q-2 0-2-2z" fill="#f4f4f4"/><path d="M4 6h2.700v2.700H4z" fill="#e8513a"/><path d="M7.300 6H10v2.700H7.300z" fill="#79b83a"/><path d="M4 9.300h2.700V12H4z" fill="#2d9be0"/><path d="M7.300 9.300H10V12H7.300z" fill="#f2b829"/></svg></button>
                <button class="flex items-center justify-center" aria-label="Recorder"><svg class="size-[14px]"><use href="#bars"/></svg></button>
                <button class="mx-[2px] flex items-center justify-center border-b border-[#76b9ed]" aria-label="Chrome"><svg class="size-[15px]" viewBox="0 0 16 16"><use href="#chrome" width="15" height="15"/><circle cx="12" cy="12" r="3.800" fill="#4a5862"/><path d="M10.500 14 12 10l1.500 4M11 12.800h2" fill="none" stroke="#ddd" stroke-width=".8"/></svg></button>
                <button class="flex items-center justify-center border-b border-[#76b9ed] bg-[#4c5b5a] pr-[2px]" aria-label="Excel"><svg class="size-[13px]" viewBox="0 0 13 13"><path d="M3 0h9q1 0 1 1v11q0 1-1 1H3z" fill="#23964b"/><path d="M7 0h5q1 0 1 1v3.500H7z" fill="#90d66c"/><path d="M3 0h4v4.500H3z" fill="#52bb55"/><rect x="0" y="5" width="7" height="7.500" rx="1" fill="#11652f"/><path d="M2.200 7l2.600 3.500M4.800 7l-2.600 3.500" stroke="#fff" stroke-width=".9"/></svg></button>
            </div>
            <div class="ml-auto flex items-center">
                <svg class="size-[13px]" viewBox="0 0 13 13"><path d="M8.500.5c3.500 1.500 5 5 3.500 8.500-2 4-8 5-11.500.5C5 10.500 9.500 6.500 8.500.5z" fill="#f4b042"/></svg>
                <span class="ml-[5px] w-[23px] text-[8px]">28°C</span>
                <span class="w-[32px] text-[8px]">Clear</span>
                <svg class="size-[9px] rotate-180"><use href="#chev"/></svg>
                <svg class="ml-[4px] size-[10px]" viewBox="0 0 10 10"><path d="M1 5.500C1 2.500 4 1 7 1.500L9.500 1 8.500 5H6z" fill="#58b947"/><path d="M.5 6C2 3.500 5 3.500 6 5L4 9C2 9 .5 8 .5 6z" fill="#3d8ad8"/><path d="M4 4.500l4-1-1.500 4-2 1.500z" fill="#f3ce3c"/></svg>
                <svg class="ml-[4px] size-[10px]"><use href="#chrome"/></svg>
                <svg class="ml-[4px] size-[10px]"><use href="#bars"/></svg>
                <svg class="ml-[5px] h-[11px] w-[8px]" viewBox="0 0 8 11"><path d="M2 3.500V.5h3.500v3M1 3.500h5.500v6.500H1z" fill="none" stroke="#cfd6d6" stroke-width=".8"/><path d="M5 8h3v3H5z" fill="#cfd6d6"/></svg>
                <svg class="ml-[6px] size-[10px]" viewBox="0 0 10 10"><path d="M1 1.500 4.500.5 8 1.500V5Q7.500 8 4.500 9.500 1.500 8 1 5z" fill="#eee"/><path d="M4.500.5v9M1 5h7" stroke="#243535" stroke-width=".7"/><circle cx="7.200" cy="7.200" r="2.600" fill="#28a745"/><path d="M6 7.200l1 1 1.500-1.800" fill="none" stroke="#fff" stroke-width=".8"/></svg>
                <svg class="ml-[4px] size-[10px]" viewBox="0 0 10 10"><path d="M1.500 9A8 8 0 0 1 9 1.500M4 9a5.500 5.500 0 0 1 5-5M6.200 9A3 3 0 0 1 9 6.500" fill="none" stroke="#98a3a3"/><circle cx="8.500" cy="8.500" r=".9" fill="#cfd6d6"/></svg>
                <svg class="ml-[3px] size-[11px]" viewBox="0 0 11 11"><path d="M.5 4h1.800L4.500 2v7L2.300 7H.5zM6 3.800q1 1.700 0 3.400M7.600 2.600q1.800 2.900 0 5.800M9.200 1.500q2.500 4 0 8" fill="none" stroke="#cfd6d6" stroke-width=".8"/></svg>
                <time class="ml-[3px] w-[35px] text-center font-['Roboto',sans-serif] leading-[10px]">2:20 PM<br>5/14/2026</time>
                <svg class="mr-[6px] ml-[7px] size-[14px]" viewBox="0 0 14 14"><path d="M0 1h10v8H5l-2 2V9H0z" fill="#f2f2f2"/><path d="M2 3.500h6M2 5.500h6" stroke="#5a6666" stroke-width=".8"/><circle cx="9.500" cy="9.500" r="4" fill="#344343" stroke="#8a9595" stroke-width=".8"/><path d="M8.500 8.500l1.200-1V12" fill="none" stroke="#fff"/></svg>
            </div>
        </footer>
    </div>

    <script>
        const letters = ["G", "H", "I", "J", "K", "L", "M", "N", "O", "P", "Q", "R", "S", "T", "U", "V"];
        // payment method, rating and total price for sheet rows 3 to 22
        const purchases = [
            ["Cash", 1, 4951], ["Debit Card", 3, 2564], ["Credit Card", 4, 3173], ["Gift Card", 1, 1526],
            ["Credit Card", 2, 1808], ["Gift Card", 1, 629], ["Debit Card", 3, 266], ["Credit Card", 2, 2191],
            ["Gift Card", 3, 4313], ["Debit Card", 4, 703], ["Credit Card", 4, 906], ["Debit Card", 4, 3698],
            ["Cash", 3, 540], ["Credit Card", 3, 1595], ["Cash", 1, 2272], ["Debit Card", 5, 4556],
            ["Online", 2, 2338], ["Debit Card", 4, 3003], ["Gift Card", 5, 48], ["Cash", 3, 331]
        ];
        const detailHeads = ["CustomerID", "Product", "PurchaseDate", "Quantity", "UnitPrice", "ProductCategory", "PaymentMethod", "ReviewRating"];
        const detail = ["C5639", "Phone", 45689, 1, 631.81, "Furniture", "Credit Card", ""];

        const numCell = n => `<th class="border-r border-[#ccc] bg-[#efefef] pr-px font-normal text-[#8a8a8a]"><span class="float-right">${n}</span></th>`;
        const blank = n => '<td class="border-r border-b border-[#e3e3e3]"></td>'.repeat(n);

        let head = '<tr class="h-[16px]"><th class="border-r border-b border-[#ccc] bg-[#efefef]"></th>';
        for (const l of letters) {
            head += l == "G" || l == "H"
                ? `<th class="border-b border-[#1e8a4f] bg-[#dadada] pt-[4px] font-normal text-[#3d7a5a]">${l}</th>`
                : `<th class="border-r border-b border-r-[#dedede] border-b-[#c4c4c4] bg-[#efefef] pt-[4px] font-normal text-[#666]">${l}</th>`;
        }
        document.getElementById("letters").innerHTML = head + "</tr>";

        let rows = `<tr class="h-[16px]">${numCell(1)}<td colspan="3" class="bg-[#001b5e]"></td>${blank(13)}</tr>`;
        rows += `<tr class="h-[12px]">${numCell(2)}`;
        for (const h of ["PaymentMethod", "ReviewRating", "TotalPrice"]) {
            rows += `<th class="border-r border-[#2d9fa8] bg-[#3fb3bd] p-0 text-white"><div class="flex items-center justify-end gap-[2px] pr-px">${h}<button class="flex size-[9px] items-center justify-center border border-[#999] bg-[#f4f4f4] text-[#333]" aria-label="Filter ${h}"><svg class="size-[5px]" viewBox="0 0 5 5"><path d="M0 1h5L2.500 4z" fill="#555"/></svg></button></div></th>`;
        }
        rows += blank(13) + "</tr>";

        purchases.forEach((p, i) => {
            const n = i + 3;
            const selected = n >= 4 && n <= 15;
            const banded = n % 2 == 1;
            const plain = banded ? "bg-[#d4d4d4]" : "bg-white";
            const fill = selected ? (banded ? "bg-[#a7a7a7]" : "bg-[#c8c8c8]") : plain;
            // outline of the selected range
            const bottom = n == 3 || n == 15 ? "border-b border-b-[#1e8a4f]" : "border-b border-b-black/5";
            const right = selected ? "border-r border-r-[#1e8a4f]" : "border-r border-r-black/5";
            const handle = n == 15 ? '<span class="absolute -right-[2px] -bottom-[2px] z-10 size-[4px] bg-[#1e8a4f]"></span>' : "";
            rows += `<tr class="${i % 4 == 3 ? "h-[11px]" : "h-[12px]"}">${numCell(n)}`;
            rows += `<td class="${fill} ${bottom} border-r border-r-black/5 text-center">${p[0]}</td>`;
            rows += `<td class="${fill} ${bottom} ${right} relative text-center">${p[1]}${handle}</td>`;
            rows += `<td class="${plain} border-r border-b border-black/5 text-center">${p[2]}</td>`;
            rows += blank(5);
            if (n == 3) {
                for (const h of detailHeads) rows += `<th class="border border-l-0 border-[#274d7c] bg-[#4674b0] pl-[2px] text-left text-white">${h}</th>`;
            } else if (n == 4) {
                for (const d of detail) rows += `<td class="border-r border-b border-[#e3e3e3] px-[2px] whitespace-nowrap ${typeof d == "number" ? "text-right" : "text-left"}">${d}</td>`;
            } else {
                rows += blank(8);
            }
            rows += "</tr>";
        });
        document.getElementById("cells").innerHTML = rows;
    </script>
</body>

</html>
